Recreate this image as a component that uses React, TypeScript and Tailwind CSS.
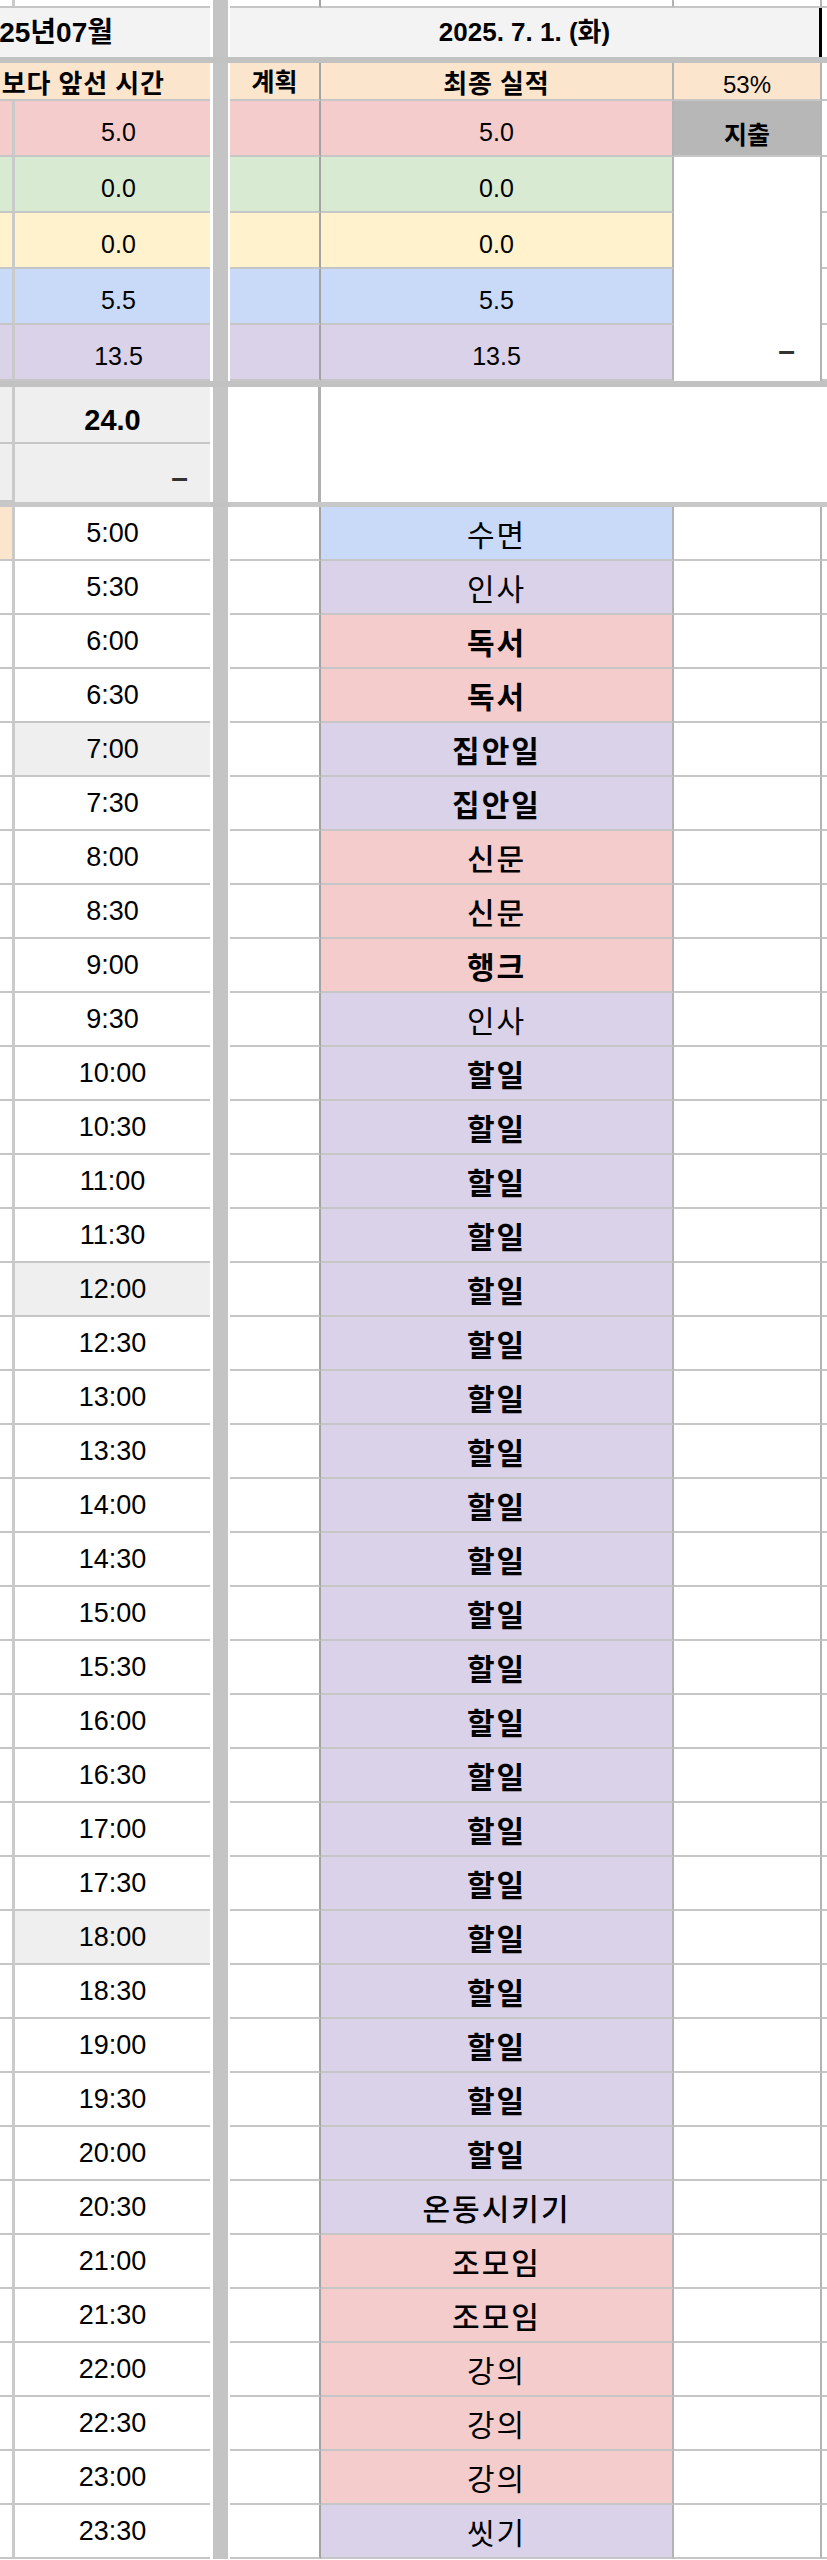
const NUM = "font-['Liberation_Sans','Noto_Sans_CJK_KR',sans-serif]";
const KR = "font-['Noto_Sans_CJK_KR','Noto_Sans',sans-serif]";

const hb = 'border-b-2 border-b-[#c6c6c6]';
const cA = `border-r-[3px] border-r-[#cacaca] ${hb}`;
const cS = 'bg-[#c4c4c4] border-l-[3px] border-r-2 border-l-white border-r-white';
const cC = `border-r-2 border-r-[#a3a3a3] ${hb}`;
const cD = `border-r-2 border-r-[#b3b3b3] ${hb}`;
const cE = `border-r-2 border-r-[#b3b3b3] ${hb}`;
const line = 'bg-[#c2c2c2]';

const RED = 'bg-[#f4cccc]';
const PUR = 'bg-[#d9d2e9]';
const BLU = 'bg-[#c9daf8]';

const summary = [
  { bg: RED, v: '5.0' },
  { bg: 'bg-[#d9ead3]', v: '0.0' },
  { bg: 'bg-[#fff2cc]', v: '0.0' },
  { bg: BLU, v: '5.5' },
  { bg: PUR, v: '13.5' },
];

type Act = { label: string; bg: string; w: string };

const acts: Act[] = [
  { label: '수면', bg: BLU, w: 'font-normal' },
  { label: '인사', bg: PUR, w: 'font-normal' },
  { label: '독서', bg: RED, w: 'font-bold' },
  { label: '독서', bg: RED, w: 'font-bold' },
  { label: '집안일', bg: PUR, w: 'font-semibold' },
  { label: '집안일', bg: PUR, w: 'font-semibold' },
  { label: '신문', bg: RED, w: 'font-medium' },
  { label: '신문', bg: RED, w: 'font-medium' },
  { label: '행크', bg: RED, w: 'font-bold' },
  { label: '인사', bg: PUR, w: 'font-normal' },
  ...Array.from({ length: 21 }, () => ({ label: '할일', bg: PUR, w: 'font-bold' })),
  { label: '온동시키기', bg: PUR, w: 'font-medium' },
  { label: '조모임', bg: RED, w: 'font-medium' },
  { label: '조모임', bg: RED, w: 'font-medium' },
  { label: '강의', bg: RED, w: 'font-normal' },
  { label: '강의', bg: RED, w: 'font-normal' },
  { label: '강의', bg: RED, w: 'font-normal' },
  { label: '씻기', bg: PUR, w: 'font-normal' },
];

const times: string[] = [];
for (let h = 5; h < 24; h++) {
  times.push(`${h}:00`, `${h}:30`);
}

// rows with a grey time cell
const greyTimes = ['7:00', '12:00', '18:00'];

export default function App() {
  return (
    <div className="w-[827px] bg-white text-black overflow-hidden">
      <div className="grid grid-cols-[15px_195px_20px_91px_353px_148px_5px] grid-rows-[8px_49px_6px_38px_repeat(5,56px)_6px_57px_58px_5px_repeat(38,54px)]">
        {/* previous row, cut off at the top */}
        <div className={cA} />
        <div className={hb} />
        <div className={cS} />
        <div className={cC} />
        <div className={cD} />
        <div className={cE} />
        <div className={hb} />

        {/* title row */}
        <div className="col-span-2 bg-[#f3f3f3] overflow-hidden flex items-center justify-end pr-[97px]">
          <span className={`${NUM} text-[28px] font-bold whitespace-nowrap`}>2025년07월</span>
        </div>
        <div className={cS} />
        <div className="col-span-3 bg-[#f3f3f3] border-r-[3px] border-r-black flex items-center justify-center">
          <span className={`${NUM} text-[26px] font-bold whitespace-nowrap`}>2025. 7. 1. (화)</span>
        </div>
        <div className="bg-white" />

        <div className={`col-span-2 ${line}`} />
        <div className={line} />
        <div className={`col-span-4 ${line}`} />

        {/* header row */}
        <div className={`col-span-2 bg-[#fce5cd] overflow-hidden flex items-center justify-end pr-[45px] ${hb}`}>
          <span className={`${KR} text-[26px] tracking-[1px] font-bold whitespace-nowrap`}>계획보다 앞선 시간</span>
        </div>
        <div className={cS} />
        <div className={`${cC} bg-[#fce5cd] flex items-center justify-center`}>
          <span className={`${KR} text-[25px] font-bold`}>계획</span>
        </div>
        <div className={`${cD} bg-[#fce5cd] flex items-center justify-center`}>
          <span className={`${KR} text-[26px] font-bold tracking-[1px]`}>최종 실적</span>
        </div>
        <div className={`${cE} bg-[#fce5cd] flex items-center justify-center pt-2`}>
          <span className={`${NUM} text-[24px]`}>53%</span>
        </div>
        <div className={hb} />

        {/* summary rows */}
        {summary.map((r, i) => (
          <Summary key={i} bg={r.bg} v={r.v} idx={i} />
        ))}

        <div className={`col-span-2 ${line}`} />
        <div className={line} />
        <div className={`col-span-4 ${line}`} />

        {/* totals */}
        <div className={`${cA} bg-[#efefef]`} />
        <div className={`${hb} bg-[#efefef] flex items-center justify-center pt-3`}>
          <span className={`${NUM} text-[29px] font-bold`}>24.0</span>
        </div>
        <div className={cS} />
        <div className="row-span-2 bg-white border-r-[3px] border-r-[#b0b0b0]" />
        <div className="col-span-3 row-span-2 bg-white" />

        <div className={`${cA} bg-[#efefef]`} />
        <div className="bg-[#efefef] flex items-center justify-end pr-[22px] pt-2">
          <span className={`${NUM} text-[30px] font-bold text-[#333]`}>–</span>
        </div>
        <div className={cS} />

        <div className="col-span-2 bg-[#c8c8c8]" />
        <div className={line} />
        <div className="col-span-4 bg-[#c8c8c8]" />

        {/* time rows */}
        {times.map((t, i) => {
          const a = acts[i];
          return (
            <TimeRow
              key={t}
              time={t}
              first={i === 0}
              grey={greyTimes.includes(t)}
              label={a.label}
              bg={a.bg}
              weight={a.w}
            />
          );
        })}
      </div>
    </div>
  );
}

function Summary({ bg, v, idx }: { bg: string; v: string; idx: number }) {
  return (
    <>
      <div className={`${cA} ${bg}`} />
      <div className={`${hb} ${bg} flex items-center justify-center pl-3 pt-[10px]`}>
        <span className={`${NUM} text-[25px]`}>{v}</span>
      </div>
      <div className={cS} />
      <div className={`${cC} ${bg}`} />
      <div className={`${cD} ${bg} flex items-center justify-center pt-[10px]`}>
        <span className={`${NUM} text-[25px]`}>{v}</span>
      </div>
      {idx === 0 && (
        <div className={`${cE} bg-[#b7b7b7] flex items-center justify-center pt-3`}>
          <span className={`${KR} text-[25px] font-bold`}>지출</span>
        </div>
      )}
      {idx === 1 && (
        <div className="row-span-4 bg-white border-r-2 border-r-[#b3b3b3] flex items-end justify-end pr-[25px] pb-[8px]">
          <span className={`${NUM} text-[30px] font-bold text-[#333]`}>–</span>
        </div>
      )}
      <div className={`${hb} bg-white`} />
    </>
  );
}

function TimeRow({
  time,
  first,
  grey,
  label,
  bg,
  weight,
}: {
  time: string;
  first: boolean;
  grey: boolean;
  label: string;
  bg: string;
  weight: string;
}) {
  return (
    <>
      <div className={`${cA} ${first ? 'bg-[#fce5cd]' : 'bg-white'}`} />
      <div className={`${hb} ${grey ? 'bg-[#efefef]' : 'bg-white'} flex items-center justify-center`}>
        <span className={`${NUM} text-[27px]`}>{time}</span>
      </div>
      <div className={cS} />
      <div className={`${cC} bg-white`} />
      <div className={`${cD} ${bg} flex items-center justify-center`}>
        <span className={`${KR} text-[30px] tracking-[2px] ${weight}`}>{label}</span>
      </div>
      <div className={`${cE} bg-white`} />
      <div className={hb} />
    </>
  );
}
